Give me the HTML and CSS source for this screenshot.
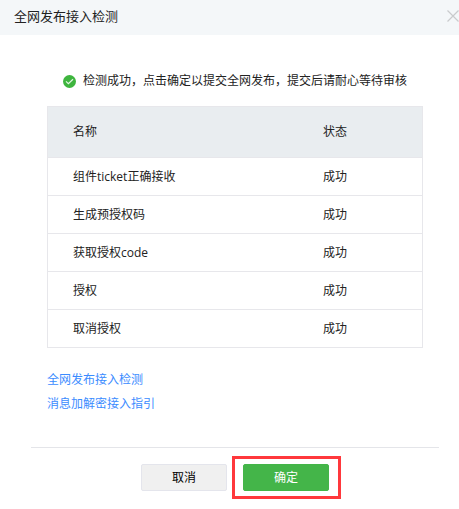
FILE: index.html
```
<!DOCTYPE html>
<html lang="zh-CN">
<head>
    <meta charset="UTF-8">
    <meta name="viewport" content="width=device-width, initial-scale=1.0">
    <title>全网发布接入检测</title>
    <link rel="stylesheet" href="styles.css">
</head>
<body>
    <div class="dialog">
        <div class="dialog-header">
            <h3>全网发布接入检测</h3>
            <button type="button" class="close" aria-label="关闭">
                <svg width="12" height="12" viewBox="0 0 12 12"><path d="M0.5 0.5l11 11M11.5 0.5l-11 11" stroke="#c9cbcd" stroke-width="1.2" fill="none"/></svg>
            </button>
        </div>
        <div class="dialog-body">
            <p class="tips">
                <svg width="13" height="13" viewBox="0 0 13 13"><circle cx="6.5" cy="6.5" r="6.5" fill="#3eb53e"/><path d="M3 6.3l2.4 2.4 4.6-4.4" stroke="#e4f5e4" stroke-width="1.2" fill="none"/></svg>
                <span>检测成功，点击确定以提交全网发布，提交后请耐心等待审核</span>
            </p>
            <table class="result">
                <thead>
                    <tr><th>名称</th><th class="status">状态</th></tr>
                </thead>
                <tbody>
                    <tr><td>组件ticket正确接收</td><td>成功</td></tr>
                    <tr><td>生成预授权码</td><td>成功</td></tr>
                    <tr><td>获取授权code</td><td>成功</td></tr>
                    <tr><td>授权</td><td>成功</td></tr>
                    <tr><td>取消授权</td><td>成功</td></tr>
                </tbody>
            </table>
            <div class="links">
                <a href="#">全网发布接入检测</a>
                <a href="#">消息加解密接入指引</a>
            </div>
        </div>
        <div class="dialog-footer">
            <button type="button" class="btn">取消</button>
            <div class="highlight">
                <button type="button" class="btn btn-primary">确定</button>
            </div>
        </div>
    </div>
</body>
</html>
```

FILE: styles.css
```
body {
    margin: 0;
    background-color: #fff;
    color: #222;
    font-family: "Open Sans", "Noto Sans CJK SC", sans-serif;
    font-size: 12px;
    line-height: 24px;
}

.dialog-header {
    display: flex;
    justify-content: space-between;
    align-items: center;
    padding: 4px 0 7px 14px;
    background-color: #f4f7f9;
}

.dialog-header h3 {
    margin: 0;
    font-size: 13px;
    font-weight: normal;
}

.close {
    display: flex;
    padding: 0;
    border: none;
    background: none;
    cursor: pointer;
}

.dialog-body {
    padding: 34px 36px 0 47px;
}

.tips {
    display: flex;
    align-items: center;
    gap: 7px;
    margin: 0 0 13px;
    padding-left: 16px;
    white-space: nowrap;
}

.result {
    width: 100%;
    border: 1px solid #e7e7eb;
    border-collapse: collapse;
}

.result th,
.result td {
    height: 37px;
    padding: 0 0 0 25px;
    border-bottom: 1px solid #e7e7eb;
    font-weight: normal;
    text-align: left;
}

.result th {
    height: 50px;
    background-color: #e9edf0;
}

.result .status {
    width: 99px;
}

.links {
    display: flex;
    flex-direction: column;
    align-items: flex-start;
    margin-top: 20px;
}

.links a {
    color: #3b8cff;
    text-decoration: none;
}

.dialog-footer {
    display: flex;
    justify-content: center;
    align-items: center;
    gap: 5px;
    margin: 31px 20px 0 31px;
    padding: 8px 0 0 12px;
    border-top: 1px solid #e4e5e9;
}

.btn {
    display: block;
    width: 86px;
    height: 27px;
    padding: 0;
    border: 1px solid #e4e5ec;
    border-radius: 2px;
    background-color: #f0f0f0;
    color: #000;
    font: inherit;
    line-height: 25px;
    cursor: pointer;
}

.btn-primary {
    border-color: #44b549;
    background-color: #44b549;
    color: #fff;
}

.highlight {
    padding: 5px 9px 5px 8px;
    border: 3px solid #ff383c;
}
```
